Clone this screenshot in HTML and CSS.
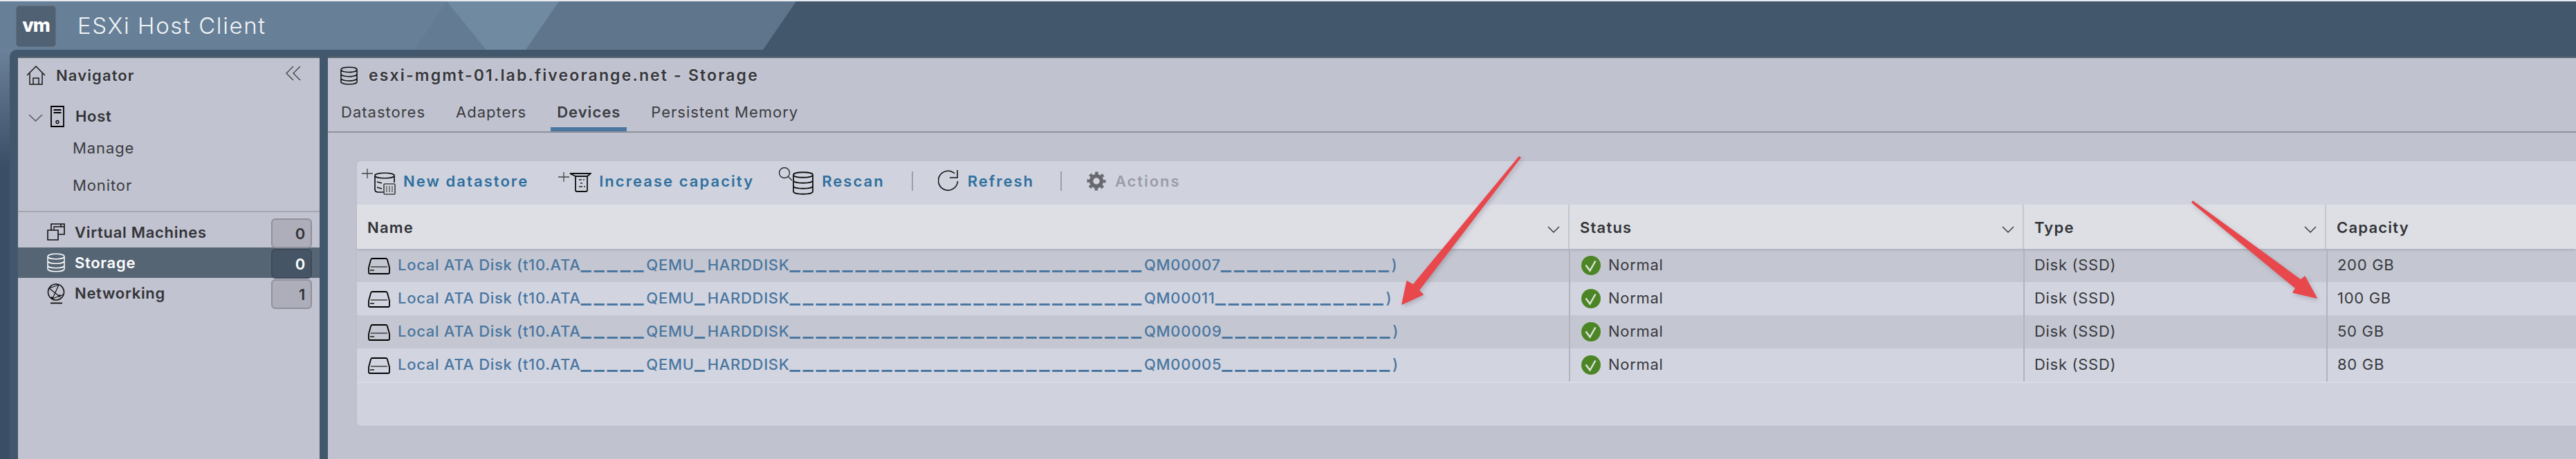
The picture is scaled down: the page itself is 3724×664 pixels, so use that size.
FILE: index.html
```html
<!DOCTYPE html>
<html lang="en">
<head>
<meta charset="utf-8">
<title>ESXi Host Client</title>
<link rel="stylesheet" href="styles.css">
</head>
<body>
<div class="app">
  <header class="topbar">
    <svg class="topbar-art" width="1160" height="70" viewBox="0 0 1160 70">
      <polygon points="0,0 1151,0 1103,70 0,70" fill="#5f758c"/>
      <polygon points="0,0 648,0 703,70 0,70" fill="#678098"/>
      <polygon points="646,0 703,70 600,70" fill="#637b93"/>
      <polygon points="646,0 808,0 760,70 703,70" fill="#708aa2"/>
    </svg>
    <div class="logo">vm</div>
    <div class="brand">ESXi Host Client</div>
  </header>
  <div class="shell">
    <div class="workspace">
      <aside class="nav">
        <div class="nav-head">
          <svg class="ic-home" width="28" height="28" viewBox="0 0 28 28"><path d="M1 14 14 1l13 13M5 11v16h18V11M10 27v-9h8v9" fill="none" stroke="#1a1a1a" stroke-width="1.5"/></svg>
          <span class="nav-title">Navigator</span>
          <svg class="ic-collapse" width="22" height="22" viewBox="0 0 22 22"><path d="M11 1 1 11l10 10M21 1 11 11l10 10" fill="none" stroke="#444" stroke-width="1.4"/></svg>
        </div>
        <div class="host-row">
          <svg class="ic-chev" width="21" height="11" viewBox="0 0 21 11"><path d="M1 1l9.500 9L20 1" fill="none" stroke="#555" stroke-width="1.4"/></svg>
          <svg class="ic-host" width="20" height="31" viewBox="0 0 20 31"><path d="M1 1h18v29H1zM4.500 6h11M4.500 10h11" fill="none" stroke="#000" stroke-width="1.800"/><circle cx="10" cy="23.500" r="2" fill="none" stroke="#000" stroke-width="1.300"/></svg>
          <span class="strong">Host</span>
        </div>
        <div class="sub-row">Manage</div>
        <div class="sub-row">Monitor</div>
        <div class="nav-divider"></div>
        <div class="nav-item">
          <svg width="26" height="26" viewBox="0 0 26 26"><path d="M1 11h15v14H1zM6 11V2h14v4M20 2h5v15h-9" fill="none" stroke="#111" stroke-width="1.600"/><path d="M10 11V6h15" fill="none" stroke="#111" stroke-width="1.300"/></svg>
          <span class="strong grow">Virtual Machines</span>
          <span class="badge">0</span>
        </div>
        <div class="nav-item is-active">
          <svg width="26" height="28" viewBox="0 0 26 28"><path d="M1 5C1 0 25 0 25 5v18c0 5-24 5-24 0zM1 5c0 5 24 5 24 0M1 11.500c0 5 24 5 24 0M1 18c0 5 24 5 24 0" fill="none" stroke="#fff" stroke-width="1.500"/></svg>
          <span class="strong grow">Storage</span>
          <span class="badge">0</span>
        </div>
        <div class="nav-item">
          <svg width="26" height="30" viewBox="0 0 26 30"><circle cx="13" cy="12.500" r="11.500" fill="none" stroke="#111" stroke-width="1.600"/><path d="M3 7l14 11M17 2 8 22M8 22l16-6M3 7l14-5" fill="none" stroke="#111" stroke-width="1.200"/><circle cx="7" cy="21" r="1.800" fill="#111"/><circle cx="18" cy="18" r="1.800" fill="#111"/><path d="M5 28.500h17" stroke="#111" stroke-width="1.800"/></svg>
          <span class="strong grow">Networking</span>
          <span class="badge">1</span>
        </div>
      </aside>
      <main class="main">
        <div class="main-title">
          <svg width="27" height="27" viewBox="0 0 26 28"><path d="M1 5C1 0 25 0 25 5v18c0 5-24 5-24 0zM1 5c0 5 24 5 24 0M1 11.500c0 5 24 5 24 0M1 18c0 5 24 5 24 0" fill="none" stroke="#111" stroke-width="1.600"/></svg>
          <span>esxi-mgmt-01.lab.fiveorange.net - Storage</span>
        </div>
        <nav class="tabs">
          <span class="tab">Datastores</span>
          <span class="tab">Adapters</span>
          <span class="tab is-active">Devices</span>
          <span class="tab">Persistent Memory</span>
        </nav>
        <section class="card">
          <div class="toolbar">
            <svg class="t1" width="49" height="40" viewBox="0 0 49 40"><path d="M0 9h16M8 2v14" stroke="#444" stroke-width="1.300"/><path d="M31 36H24q-5 0-5-4V12c0-5 28-5 28 0v10M19 12c0 5 28 5 28 0M22 21l7 2M22 29l7 2" fill="none" stroke="#111" stroke-width="1.700"/><rect x="32" y="24" width="16" height="15" rx="1.500" fill="#cfd2dc" stroke="#444" stroke-width="1.700"/><path d="M36 27v9M40 27v9M44 27v9" stroke="#555" stroke-width="1.300"/></svg>
            <span class="tool-label">New datastore</span>
            <svg class="t2" width="48" height="40" viewBox="0 0 48 40"><path d="M0 14h16M8 7v14" stroke="#444" stroke-width="1.300"/><path d="M17 9h30l-5 4v20q0 2-2 2H27q-2 0-2-2V13zM25 13h17" fill="none" stroke="#111" stroke-width="1.800"/><path d="M30 18h4M32 23h3M30 28h5M36 18h2M37 28h2" stroke="#222" stroke-width="1.500"/></svg>
            <span class="tool-label">Increase capacity</span>
            <svg class="t3" width="52" height="40" viewBox="0 0 52 40"><circle cx="9" cy="8" r="7.500" fill="none" stroke="#222" stroke-width="1.300"/><path d="M14.500 13.500 20 19" stroke="#333" stroke-width="1.500"/><path d="M22 11c0-5 28-5 28 0v24c0 5-28 5-28 0zM22 11c0 5 28 5 28 0M22 19c0 5 28 5 28 0M22 27c0 5 28 5 28 0" fill="none" stroke="#111" stroke-width="1.800"/></svg>
            <span class="tool-label">Rescan</span>
            <span class="tool-sep"></span>
            <svg width="30" height="31" viewBox="0 0 30 31"><path d="M24 5A14 14 0 1 0 28.500 16" fill="none" stroke="#111" stroke-width="1.600"/><path d="M17 11h11V0" fill="none" stroke="#111" stroke-width="1.600"/></svg>
            <span class="tool-label tight">Refresh</span>
            <span class="tool-sep second"></span>
            <svg width="28" height="28" viewBox="0 0 28 28"><circle cx="14" cy="14" r="11.500" fill="none" stroke="#68696f" stroke-width="4" stroke-dasharray="4.500 4.530" stroke-dashoffset="2.200"/><circle cx="14" cy="14" r="7.500" fill="none" stroke="#68696f" stroke-width="5.500"/></svg>
            <span class="tool-label tight is-disabled">Actions</span>
          </div>
          <div class="grid-head">
            <div class="th">Name<svg width="18" height="10" viewBox="0 0 18 10"><path d="M1 1l8 8 8-8" fill="none" stroke="#333" stroke-width="1.400"/></svg></div>
            <div class="th">Status<svg width="18" height="10" viewBox="0 0 18 10"><path d="M1 1l8 8 8-8" fill="none" stroke="#333" stroke-width="1.400"/></svg></div>
            <div class="th">Type<svg width="18" height="10" viewBox="0 0 18 10"><path d="M1 1l8 8 8-8" fill="none" stroke="#333" stroke-width="1.400"/></svg></div>
            <div class="th">Capacity</div>
          </div>
          <div class="row">
            <div class="td name"><svg class="disk" width="32" height="24" viewBox="0 0 32 24"><path d="M6 1h20q1.500 0 2 2l3 11v7q0 2-2 2H3q-2 0-2-2v-7L4 3q.5-2 2-2z" fill="none" stroke="#000" stroke-width="1.800"/><path d="M4 13h24" stroke="#555" stroke-width="1.800"/><path d="M3 18h6" stroke="#444" stroke-width="2"/></svg><a class="link">Local ATA Disk (t10.ATA<span class="u">_____</span>QEMU<span class="u">_</span>HARDDISK<span class="u">___________________________</span>QM00007<span class="u">_____________</span>)</a></div>
            <div class="td status"><svg width="28" height="28" viewBox="0 0 28 28"><circle cx="14" cy="14" r="14" fill="#4c8525"/><path d="M6.500 13.500l6 8 8-14" fill="none" stroke="#dde3dc" stroke-width="2.400"/></svg>Normal</div>
            <div class="td">Disk (SSD)</div>
            <div class="td">200 GB</div>
          </div>
          <div class="row">
            <div class="td name"><svg class="disk" width="32" height="24" viewBox="0 0 32 24"><path d="M6 1h20q1.500 0 2 2l3 11v7q0 2-2 2H3q-2 0-2-2v-7L4 3q.5-2 2-2z" fill="none" stroke="#000" stroke-width="1.800"/><path d="M4 13h24" stroke="#555" stroke-width="1.800"/><path d="M3 18h6" stroke="#444" stroke-width="2"/></svg><a class="link">Local ATA Disk (t10.ATA<span class="u">_____</span>QEMU<span class="u">_</span>HARDDISK<span class="u">___________________________</span>QM00011<span class="u">_____________</span>)</a></div>
            <div class="td status"><svg width="28" height="28" viewBox="0 0 28 28"><circle cx="14" cy="14" r="14" fill="#4c8525"/><path d="M6.500 13.500l6 8 8-14" fill="none" stroke="#dde3dc" stroke-width="2.400"/></svg>Normal</div>
            <div class="td">Disk (SSD)</div>
            <div class="td">100 GB</div>
          </div>
          <div class="row">
            <div class="td name"><svg class="disk" width="32" height="24" viewBox="0 0 32 24"><path d="M6 1h20q1.500 0 2 2l3 11v7q0 2-2 2H3q-2 0-2-2v-7L4 3q.5-2 2-2z" fill="none" stroke="#000" stroke-width="1.800"/><path d="M4 13h24" stroke="#555" stroke-width="1.800"/><path d="M3 18h6" stroke="#444" stroke-width="2"/></svg><a class="link">Local ATA Disk (t10.ATA<span class="u">_____</span>QEMU<span class="u">_</span>HARDDISK<span class="u">___________________________</span>QM00009<span class="u">_____________</span>)</a></div>
            <div class="td status"><svg width="28" height="28" viewBox="0 0 28 28"><circle cx="14" cy="14" r="14" fill="#4c8525"/><path d="M6.500 13.500l6 8 8-14" fill="none" stroke="#dde3dc" stroke-width="2.400"/></svg>Normal</div>
            <div class="td">Disk (SSD)</div>
            <div class="td">50 GB</div>
          </div>
          <div class="row">
            <div class="td name"><svg class="disk" width="32" height="24" viewBox="0 0 32 24"><path d="M6 1h20q1.500 0 2 2l3 11v7q0 2-2 2H3q-2 0-2-2v-7L4 3q.5-2 2-2z" fill="none" stroke="#000" stroke-width="1.800"/><path d="M4 13h24" stroke="#555" stroke-width="1.800"/><path d="M3 18h6" stroke="#444" stroke-width="2"/></svg><a class="link">Local ATA Disk (t10.ATA<span class="u">_____</span>QEMU<span class="u">_</span>HARDDISK<span class="u">___________________________</span>QM00005<span class="u">_____________</span>)</a></div>
            <div class="td status"><svg width="28" height="28" viewBox="0 0 28 28"><circle cx="14" cy="14" r="14" fill="#4c8525"/><path d="M6.500 13.500l6 8 8-14" fill="none" stroke="#dde3dc" stroke-width="2.400"/></svg>Normal</div>
            <div class="td">Disk (SSD)</div>
            <div class="td">80 GB</div>
          </div>
          <div class="card-foot"></div>
        </section>
      </main>
    </div>
  </div>
  <svg class="arrows" width="3724" height="664" viewBox="0 0 3724 664">
    <polygon points="2196,227 2198,228 2051,420 2057,426 2027,440 2034,407 2043,412" fill="#e8474c" stroke="#e8474c" stroke-width="1.500" stroke-linejoin="round"/>
    <polygon points="3170,291 3169,293 3319,417 3315,423 3349,431 3332,400 3326,405" fill="#e8474c" stroke="#e8474c" stroke-width="1.500" stroke-linejoin="round"/>
  </svg>
</div>
</body>
</html>
```
FILE: styles.css
```css
* { box-sizing: border-box; }
html, body { margin: 0; padding: 0; }
body { background: #42576c; font-family: Inter, "Liberation Sans", sans-serif; color: #333438; }
svg { display: block; flex: none; }

.app { position: relative; width: 3724px; height: 664px; overflow: hidden; display: flex; flex-direction: column; border-top: 2px solid #e9ebf2; }

.topbar { position: relative; height: 70px; flex: none; display: flex; align-items: flex-start; background: #42576c; color: #fff; }
.topbar-art { position: absolute; left: 0; top: 0; }
.logo { position: relative; margin: 6px 0 0 23px; width: 58px; height: 60px; background: #4f6172; border: 1px solid #5f6f80; border-radius: 5px; display: flex; align-items: center; justify-content: center; font-size: 27px; font-weight: 800; letter-spacing: -1px; color: #fff; padding-bottom: 4px; }
.brand { position: relative; margin: 14px 0 0 31px; font-size: 33px; line-height: 42px; font-weight: 300; letter-spacing: 1.600px; color: #f2f4f7; }

.shell { flex: 1; min-height: 0; padding-left: 14px; background: linear-gradient(#6b8199 0, #3a4f66 170px); display: flex; }
.workspace { flex: 1; min-width: 0; display: flex; gap: 12px; padding: 10px 0 0 12px; background: #42576c; border-top-left-radius: 10px; }

.nav { width: 436px; flex: none; background: #c1c3d0; border-top: 2px solid #5b6570; font-size: 22px; letter-spacing: .7px; }
.nav-head { height: 50px; display: flex; align-items: center; padding-left: 12px; }
.nav-title { margin-left: 15px; font-weight: 600; flex: 1; letter-spacing: 1.100px; text-shadow: 0 0 3px rgba(255, 255, 255, .4); }
.ic-collapse { margin-right: 27px; margin-top: -6px; }
.strong { font-weight: 600; }
.grow { flex: 1; }
.host-row { margin-top: 15px; height: 38px; display: flex; align-items: center; padding-left: 15px; }
.ic-chev { margin-right: 11px; margin-top: 4px; }
.ic-host { margin-right: 16px; }
.sub-row { height: 54px; display: flex; align-items: center; padding-left: 79px; font-weight: 400; letter-spacing: .9px; color: #3b3c41; }
.nav-divider { margin-top: 10px; height: 2px; background: #a6a7b0; }
.nav-item { margin-top: 0; height: 44px; display: flex; align-items: flex-start; padding: 0 11px 0 42px; }
.nav-divider + .nav-item { margin-top: 7px; }
.nav-item svg { margin-top: 8px; margin-right: 14px; }
.nav-item .strong { line-height: 44px; }
.badge { width: 59px; height: 43px; margin-top: 2px; display: flex; align-items: center; justify-content: flex-end; padding-right: 7px; background: #adaeb9; border: 2px solid #8f909c; border-radius: 6px; font-weight: 600; position: relative; }
.nav-item.is-active { background: #556574; color: #fff; }
.nav-item.is-active .badge { background: #465565; border-color: #3e4a57; }

.main { flex: 1; min-width: 0; background: #c0c2cf; border-top: 2px solid #5b6570; display: flex; flex-direction: column; font-size: 22px; }
.main-title { height: 50px; display: flex; align-items: center; gap: 15px; padding-left: 17px; font-size: 23px; letter-spacing: 2.150px; font-weight: 600; color: #36373c; text-shadow: 0 0 3px rgba(255, 255, 255, .4); }
.tabs { height: 58px; display: flex; gap: 26px; padding-left: 10px; border-bottom: 2px solid #8f929c; letter-spacing: 1px; }
.tab { height: 56px; padding: 0 9px; display: flex; align-items: center; color: #3b3c41; }
.tab.is-active { font-weight: 600; border-bottom: 6px solid #4a76a0; padding-top: 6px; }

.card { margin: 41px 0 0 42px; background: #d0d3dd; border-radius: 5px 0 0 5px; box-shadow: 0 0 2px #b0b2bd; width: 3208px; }
.toolbar { height: 63px; display: flex; align-items: center; padding: 0 0 6px 7px; font-size: 22px; }
.tool-label { font-weight: 600; color: #2f6f9f; margin-left: 11px; letter-spacing: 2.050px; }
.t2 { margin-left: 43px; }
.t3 { margin-left: 35px; }
.tool-sep { width: 2px; height: 28px; background: #9c9ea8; margin: 0 36px 0 39px; }
.tool-sep.second { margin-left: 38px; }
.tight { margin-left: 13px; letter-spacing: 1.950px; }
.is-disabled { color: #9a9ca8; }

.grid-head { height: 64px; display: grid; grid-template-columns: 1751px 657px 437px 1fr; background: #dddfe5; box-shadow: 0 3px 3px -1px #aeb0ba; position: relative; }
.th { display: flex; align-items: center; justify-content: space-between; padding: 2px 12px 0 15px; font-weight: 600; font-size: 22px; letter-spacing: 1.200px; border-left: 2px solid #c4c6cf; color: #333438; }
.th:first-child { border-left: none; }
.th svg { margin-top: 6px; }
.row { height: 48px; display: grid; grid-template-columns: 1752px 657px 438px 1fr; background: #d2d5e0; color: #38393e; }
.grid-head + .row, .grid-head + .row + .row + .row { background: #c4c7d1; }
.td { display: flex; align-items: center; padding-left: 14px; border-left: 2px solid #b1b3be; font-weight: 400; letter-spacing: .7px; padding-bottom: 2px; }
.td:first-child { border-left: none; }
.td.name { padding-left: 16px; }
.td .disk { margin: 4px 11px 0 0; }
.td.status { padding-left: 16px; }
.td.status svg { margin: 2px 11px 0 0; }
.link { font-weight: 500; color: #4a76a0; white-space: nowrap; letter-spacing: .7px; }
.u { font-size: 33px; line-height: 0; letter-spacing: 3.700px; }
.card-foot { height: 64px; border-top: 2px solid #dadce4; }

.arrows { position: absolute; left: 0; top: -2px; pointer-events: none; filter: drop-shadow(2px 3px 3px rgba(60, 60, 80, .25)); }
```
